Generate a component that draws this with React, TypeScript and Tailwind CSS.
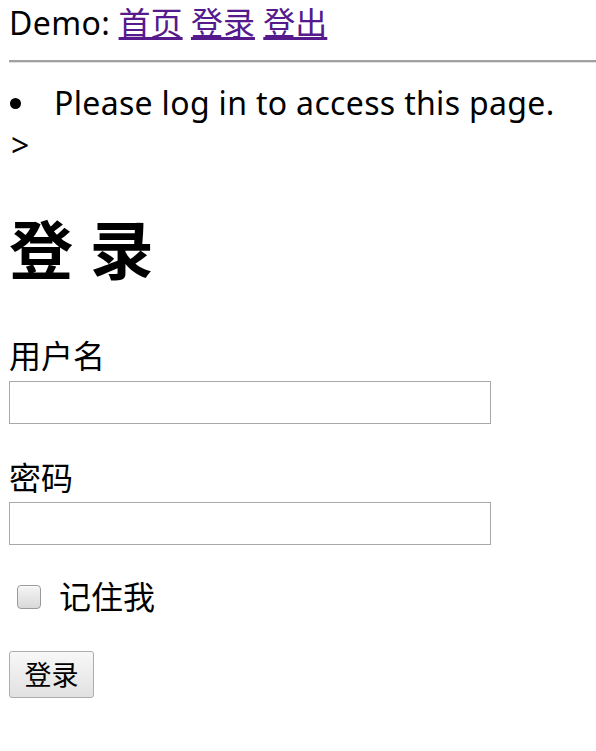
const font = { fontFamily: '"Noto Sans", "Noto Sans CJK SC", sans-serif' };

export default function App() {
    return (
        <div className="min-h-[751px] bg-white pl-[9px] text-[32px] leading-[42px] text-black" style={font}>
            {/* Nav */}
            <div className="pt-[2px]">
                <span className="tracking-[0.4px]">Demo:</span>{' '}
                <a href="#" className="text-[#551a8b] underline">首页</a>{' '}
                <a href="#" className="text-[#551a8b] underline">登录</a>{' '}
                <a href="#" className="text-[#551a8b] underline">登出</a>
            </div>
            <div className="mt-[16px] h-[3px] border-t-2 border-b border-t-[#a0a0a0] border-b-[#e0e0e0]" />

            {/* Flash messages */}
            <ul className="mt-[19px]">
                <li className="flex items-center">
                    <span className="ml-[1px] h-[11px] w-[11px] rounded-full bg-black" />
                    <span className="ml-[33px] tracking-[0.33px]">Please log in to access this page.</span>
                </li>
            </ul>
            <div className="pl-[2px]">&gt;</div>

            {/* Form */}
            <h1 className="mt-[44px] text-[64px] font-bold leading-[80px]">登 录</h1>
            <form className="mt-[45px]" onSubmit={(e) => e.preventDefault()}>
                <label className="block">用户名</label>
                <input type="text" className="mt-[4px] block h-[43px] w-[482px] border border-[#a9a9a9] bg-white outline-none" />

                <label className="mt-[33px] block">密码</label>
                <input type="password" className="mt-[3px] block h-[43px] w-[482px] border border-[#a9a9a9] bg-white outline-none" />

                <div className="mt-[31px] flex items-center">
                    <span className="ml-[8px] h-[24px] w-[24px] rounded-[4px] border border-[#9a9a9a] bg-gradient-to-b from-[#f5f5f5] to-[#d9d9d9] shadow-[inset_0_1px_1px_rgba(255,255,255,0.8)]" />
                    <span className="ml-[18px]">记住我</span>
                </div>

                <button
                    type="submit"
                    className="mt-[33px] block h-[47px] w-[85px] rounded-[3px] border border-[#adadad] bg-gradient-to-b from-[#f8f8f8] to-[#e1e1e1] text-[27px] leading-none text-black"
                >
                    登录
                </button>
            </form>
        </div>
    );
}
